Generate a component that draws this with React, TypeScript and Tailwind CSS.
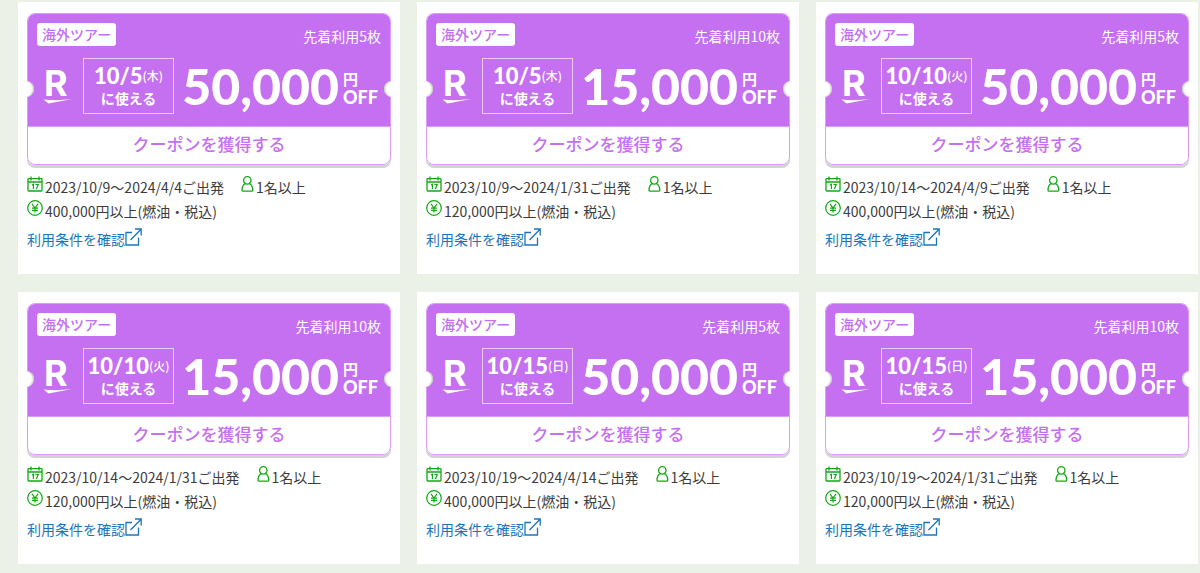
type Coupon = {
    id: number;
    stock: number;
    day: string;
    weekday: string;
    amount: string;
    period: string;
    minimum: string;
};

const coupons: Coupon[] = [
    { id: 1, stock: 5, day: '10/5', weekday: '木', amount: '50,000', period: '2023/10/9〜2024/4/4', minimum: '400,000' },
    { id: 2, stock: 10, day: '10/5', weekday: '木', amount: '15,000', period: '2023/10/9〜2024/1/31', minimum: '120,000' },
    { id: 3, stock: 5, day: '10/10', weekday: '火', amount: '50,000', period: '2023/10/14〜2024/4/9', minimum: '400,000' },
    { id: 4, stock: 10, day: '10/10', weekday: '火', amount: '15,000', period: '2023/10/14〜2024/1/31', minimum: '120,000' },
    { id: 5, stock: 5, day: '10/15', weekday: '日', amount: '50,000', period: '2023/10/19〜2024/4/14', minimum: '400,000' },
    { id: 6, stock: 10, day: '10/15', weekday: '日', amount: '15,000', period: '2023/10/19〜2024/1/31', minimum: '120,000' },
];

function BrandLogo() {
    return (
        <div className="flex w-[30px] shrink-0 flex-col pb-px">
            <span className="pl-px font-['Inter',sans-serif] text-[36px]/[32px] font-bold">R</span>
            <svg width="30" height="5" viewBox="0 0 30 5" fill="#fff" aria-hidden="true">
                <path d="M0.5 0.5Q14 2 29 0L5.5 4.5Z" />
            </svg>
        </div>
    );
}

function CalendarIcon() {
    return (
        <svg width="16" height="16" viewBox="0 0 16 16" fill="none" stroke="#14a814" strokeWidth="1.3">
            <rect x="1" y="2.6" width="14" height="12.4" rx="0.8" />
            <path d="M1 6H15M4 0.6V4.4M12 0.6V4.4" />
            <path d="M5 9L6.4 8.2V13M8.4 8.5H11.2L9.4 13" strokeWidth="1.2" />
        </svg>
    );
}

function PersonIcon() {
    return (
        <svg width="13" height="16" viewBox="0 0 13 16" fill="none" stroke="#14a814" strokeWidth="1.3">
            <circle cx="6.3" cy="4.4" r="3.7" />
            <path d="M4.2 7.6C2.4 8.3 1.2 10.4 1 14.2Q1 15.2 2 15.2H10.8Q11.8 15.2 11.8 14.2C11.6 10.4 10.4 8.3 8.4 7.6" />
        </svg>
    );
}

function YenIcon() {
    return (
        <svg width="16" height="16" viewBox="0 0 16 16" fill="none" stroke="#14a814">
            <circle cx="8" cy="8" r="7.3" strokeWidth="1.2" />
            <path d="M5 3.8L8 8L11 3.8M8 8V12.4M5 8.2H11M5 10.3H11" strokeWidth="1.2" />
        </svg>
    );
}

function ExternalIcon() {
    return (
        <svg width="17" height="18" viewBox="0 0 17 18" fill="none" stroke="#1b75bc" strokeWidth="1.3">
            <path d="M7 4.5H1V17H13.5V9.5" />
            <path d="M5.5 12L16 1.2M10 1H16.2V7.5" />
        </svg>
    );
}

function CouponTicket({ coupon }: { coupon: Coupon }) {
    return (
        <div className="relative rounded-lg border border-[#dc9cfb] bg-white">
            <div className="rounded-t-[7px] bg-[#c470f0] text-white">
                <div className="flex items-center justify-between px-[9px] pt-[9px]">
                    <span className="rounded-[3px] bg-white px-[5px] text-sm/[23px] font-medium text-[#c470f0]">
                        海外ツアー
                    </span>
                    <span className="pt-[3px] text-sm/[20px]">先着利用{coupon.stock}枚</span>
                </div>
                <div className="flex items-center pt-3 pr-3 pb-3 pl-[15px]">
                    <BrandLogo />
                    <div className="ml-[10px] flex h-14 w-[91px] shrink-0 flex-col items-center justify-center border border-[#eac8fb]">
                        <p className="flex items-center whitespace-nowrap">
                            <span className="font-['Lato',sans-serif] text-[22px]/[24px] font-black">{coupon.day}</span>
                            <span className="text-xs/[16px] font-medium">({coupon.weekday})</span>
                        </p>
                        <p className="text-sm/[20px] font-bold">に使える</p>
                    </div>
                    <p className="ml-auto flex items-center">
                        <span className="font-['Lato',sans-serif] text-[50px]/[56px] font-black">{coupon.amount}</span>
                        <span className="ml-1 flex flex-col pt-1">
                            <span className="text-[15px]/[18px] font-bold">円</span>
                            <span className="font-['Lato',sans-serif] text-[18px]/[18px] font-black">OFF</span>
                        </span>
                    </p>
                </div>
            </div>
            <button
                type="button"
                className="block w-full cursor-pointer rounded-b-[7px] border-t border-[#dc9cfb] pb-[3px] text-center text-[17px]/[34px] font-medium text-[#c470f0]"
            >
                クーポンを獲得する
            </button>
            <span className="absolute top-[67px] -left-[10px] size-4 rounded-full bg-white shadow-[inset_-2px_0_2px_-1px_#b9c2b0]" />
            <span className="absolute top-[67px] -right-[10px] size-4 rounded-full bg-white shadow-[inset_2px_0_2px_-1px_#b9c2b0]" />
        </div>
    );
}

function CouponCard({ coupon }: { coupon: Coupon }) {
    return (
        <li className="bg-white px-[9px] pt-[11px] pb-[22px]">
            <div className="rounded-lg shadow-[0_3px_0_#d3d3d3]">
                <CouponTicket coupon={coupon} />
            </div>
            <div className="pt-[11px] text-sm/[22px] text-[#3c3c3c]">
                <div className="flex h-6 gap-[17px]">
                    <p className="flex gap-[2px]">
                        <CalendarIcon />
                        {coupon.period}ご出発
                    </p>
                    <p className="flex gap-[2px]">
                        <PersonIcon />
                        1名以上
                    </p>
                </div>
                <p className="flex h-6 gap-[2px]">
                    <YenIcon />
                    {coupon.minimum}円以上(燃油・税込)
                </p>
                <a href="#terms" className="mt-1 flex h-6 w-fit text-[#1b75bc]">
                    利用条件を確認
                    <ExternalIcon />
                </a>
            </div>
        </li>
    );
}

export default function App() {
    return (
        <main className="min-h-screen bg-[#ecf1e7] pt-[2px] pr-[2px] pb-2 pl-[18px] font-['Noto_Sans_CJK_JP',sans-serif]">
            <ul className="grid grid-cols-3 gap-x-[17px] gap-y-[18px]">
                {coupons.map((coupon) => (
                    <CouponCard key={coupon.id} coupon={coupon} />
                ))}
            </ul>
        </main>
    );
}
